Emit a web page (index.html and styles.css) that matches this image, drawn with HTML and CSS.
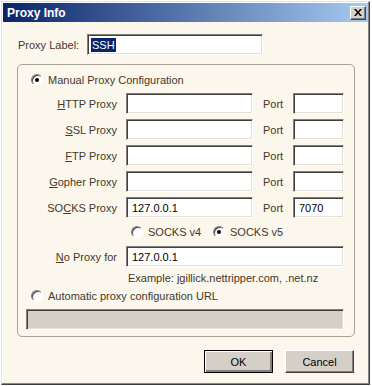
FILE: index.html
```html
<!DOCTYPE html>
<html lang="en">
<head>
    <meta charset="UTF-8">
    <title>Proxy Info</title>
    <link rel="stylesheet" href="styles.css">
</head>
<body>

    <div class="window">
        <div class="titlebar">
            <span class="title">Proxy Info</span>
            <span class="close-btn">
                <svg width="8" height="7" viewBox="0 0 8 7">
                    <path d="M0 0h2l2 2.5L6 0h2L5 3.5 8 7H6L4 4.5 2 7H0l3-3.5z" fill="#000"/>
                </svg>
            </span>
        </div>

        <div class="content">
            <div class="label-row">
                <span class="label-text">Proxy Label:</span>
                <div class="field label-field"><span class="selected">SSH</span></div>
            </div>

            <div class="group">
                <div class="radio-row">
                    <span class="radio checked"></span>
                    <span>Manual Proxy Configuration</span>
                </div>

                <div class="proxy-grid">
                    <span class="row-label"><u>H</u>TTP Proxy</span>
                    <div class="field"></div>
                    <span class="port-label">Port</span>
                    <div class="field"></div>

                    <span class="row-label"><u>S</u>SL Proxy</span>
                    <div class="field"></div>
                    <span class="port-label">Port</span>
                    <div class="field"></div>

                    <span class="row-label"><u>F</u>TP Proxy</span>
                    <div class="field"></div>
                    <span class="port-label">Port</span>
                    <div class="field"></div>

                    <span class="row-label"><u>G</u>opher Proxy</span>
                    <div class="field"></div>
                    <span class="port-label">Port</span>
                    <div class="field"></div>

                    <span class="row-label">SO<u>C</u>KS Proxy</span>
                    <div class="field">127.0.0.1</div>
                    <span class="port-label">Port</span>
                    <div class="field">7070</div>

                    <div class="socks-versions">
                        <span class="option">
                            <span class="radio"></span>
                            <span>SOCKS v4</span>
                        </span>
                        <span class="option">
                            <span class="radio checked"></span>
                            <span>SOCKS v5</span>
                        </span>
                    </div>

                    <span class="row-label"><u>N</u>o Proxy for</span>
                    <div class="field wide">127.0.0.1</div>

                    <span class="example">Example: jgillick.nettripper.com, .net.nz</span>
                </div>

                <div class="radio-row auto-row">
                    <span class="radio"></span>
                    <span>Automatic proxy configuration URL</span>
                </div>
                <div class="field disabled auto-field"></div>
            </div>

            <div class="buttons">
                <span class="button default">OK</span>
                <span class="button">Cancel</span>
            </div>
        </div>
    </div>

</body>
</html>
```

FILE: styles.css
```css
body {
    margin: 0;
    background-color: #ffffff;
    font-family: "Liberation Sans", Arial, sans-serif;
    font-size: 11px;
    color: #45382a;
}

.window {
    box-sizing: border-box;
    width: 369px;
    height: 384px;
    margin: 1px 0 0 1px;
    padding: 1px;
    background-color: #fcf7ec;
    border: 1px solid;
    border-color: #e4e0d8 #404040 #404040 #e4e0d8;
    box-shadow: inset -1px -1px #8a8680, inset 1px 1px #ffffff;
}

.titlebar {
    height: 19px;
    display: flex;
    align-items: center;
    justify-content: space-between;
    padding: 0 2px 0 4px;
    background: linear-gradient(to right, #0a246a, #a6caf0);
}

.title {
    color: #fff;
    font-weight: bold;
    font-size: 12px;
}

.close-btn {
    box-sizing: border-box;
    width: 16px;
    height: 14px;
    display: flex;
    align-items: center;
    justify-content: center;
    background-color: #d4d0c8;
    border: 1px solid;
    border-color: #fff #404040 #404040 #fff;
    box-shadow: inset -1px -1px #808080;
}

.content {
    padding: 0 13px 0 14px;
}

.label-row {
    display: flex;
    align-items: center;
    margin-top: 12px;
}

.label-text {
    width: 69px;
    padding-left: 1px;
}

.field {
    box-sizing: border-box;
    height: 21px;
    display: flex;
    align-items: center;
    padding-left: 5px;
    background-color: #fff;
    color: #000;
    border: 1px solid;
    border-color: #808080 #ffffff #ffffff #808080;
    box-shadow: inset 1px 1px #404040, inset -1px -1px #e4e0d8;
}

.label-field {
    width: 176px;
    padding-left: 3px;
}

.selected {
    background-color: #0a246a;
    color: #fff;
    padding: 1px 1px;
}

.group {
    box-sizing: border-box;
    height: 273px;
    margin-top: 9px;
    padding-top: 8px;
    border: 1px solid #a8a398;
    border-radius: 5px;
}

.radio-row {
    display: flex;
    align-items: center;
    height: 14px;
    padding-left: 13px;
    gap: 5px;
}

.radio {
    box-sizing: border-box;
    position: relative;
    width: 12px;
    height: 12px;
    border-radius: 50%;
    background-color: #fff;
    border: 1px solid;
    border-color: #808080 #ffffff #ffffff #808080;
    box-shadow: inset 1px 1px #404040;
}

.radio.checked::after {
    content: "";
    position: absolute;
    left: 3px;
    top: 3px;
    width: 4px;
    height: 4px;
    border-radius: 50%;
    background-color: #000;
}

.proxy-grid {
    display: grid;
    grid-template-columns: 108px 127px 40px 51px;
    grid-template-rows: 21px 21px 21px 21px 21px 18px 21px 13px;
    row-gap: 5px;
    margin-top: 6px;
}

.row-label {
    align-self: center;
    text-align: right;
    padding-right: 9px;
}

.port-label {
    align-self: center;
    padding-left: 10px;
}

.socks-versions {
    grid-column: 2 / 5;
    display: flex;
    align-items: center;
    padding-left: 5px;
}

.option {
    display: flex;
    align-items: center;
    gap: 5px;
    width: 82px;
}

.field.wide {
    grid-column: 2 / 5;
}

.example {
    grid-column: 2 / 5;
    padding-left: 2px;
    line-height: 13px;
}

.auto-row {
    margin-top: 4px;
}

.field.disabled {
    background-color: #d4d0c8;
}

.auto-field {
    width: 318px;
    margin: 6px 0 0 8px;
}

.buttons {
    display: flex;
    justify-content: flex-end;
    gap: 12px;
    margin-top: 13px;
    padding-right: 1px;
}

.button {
    box-sizing: border-box;
    width: 69px;
    height: 23px;
    display: flex;
    align-items: center;
    justify-content: center;
    background-color: #d4d0c8;
    color: #000;
    border: 1px solid;
    border-color: #ffffff #404040 #404040 #ffffff;
    box-shadow: inset -1px -1px #808080;
}

.button.default {
    border-color: #000;
    box-shadow: inset 1px 1px #ffffff, inset -2px -2px #808080;
}
```
